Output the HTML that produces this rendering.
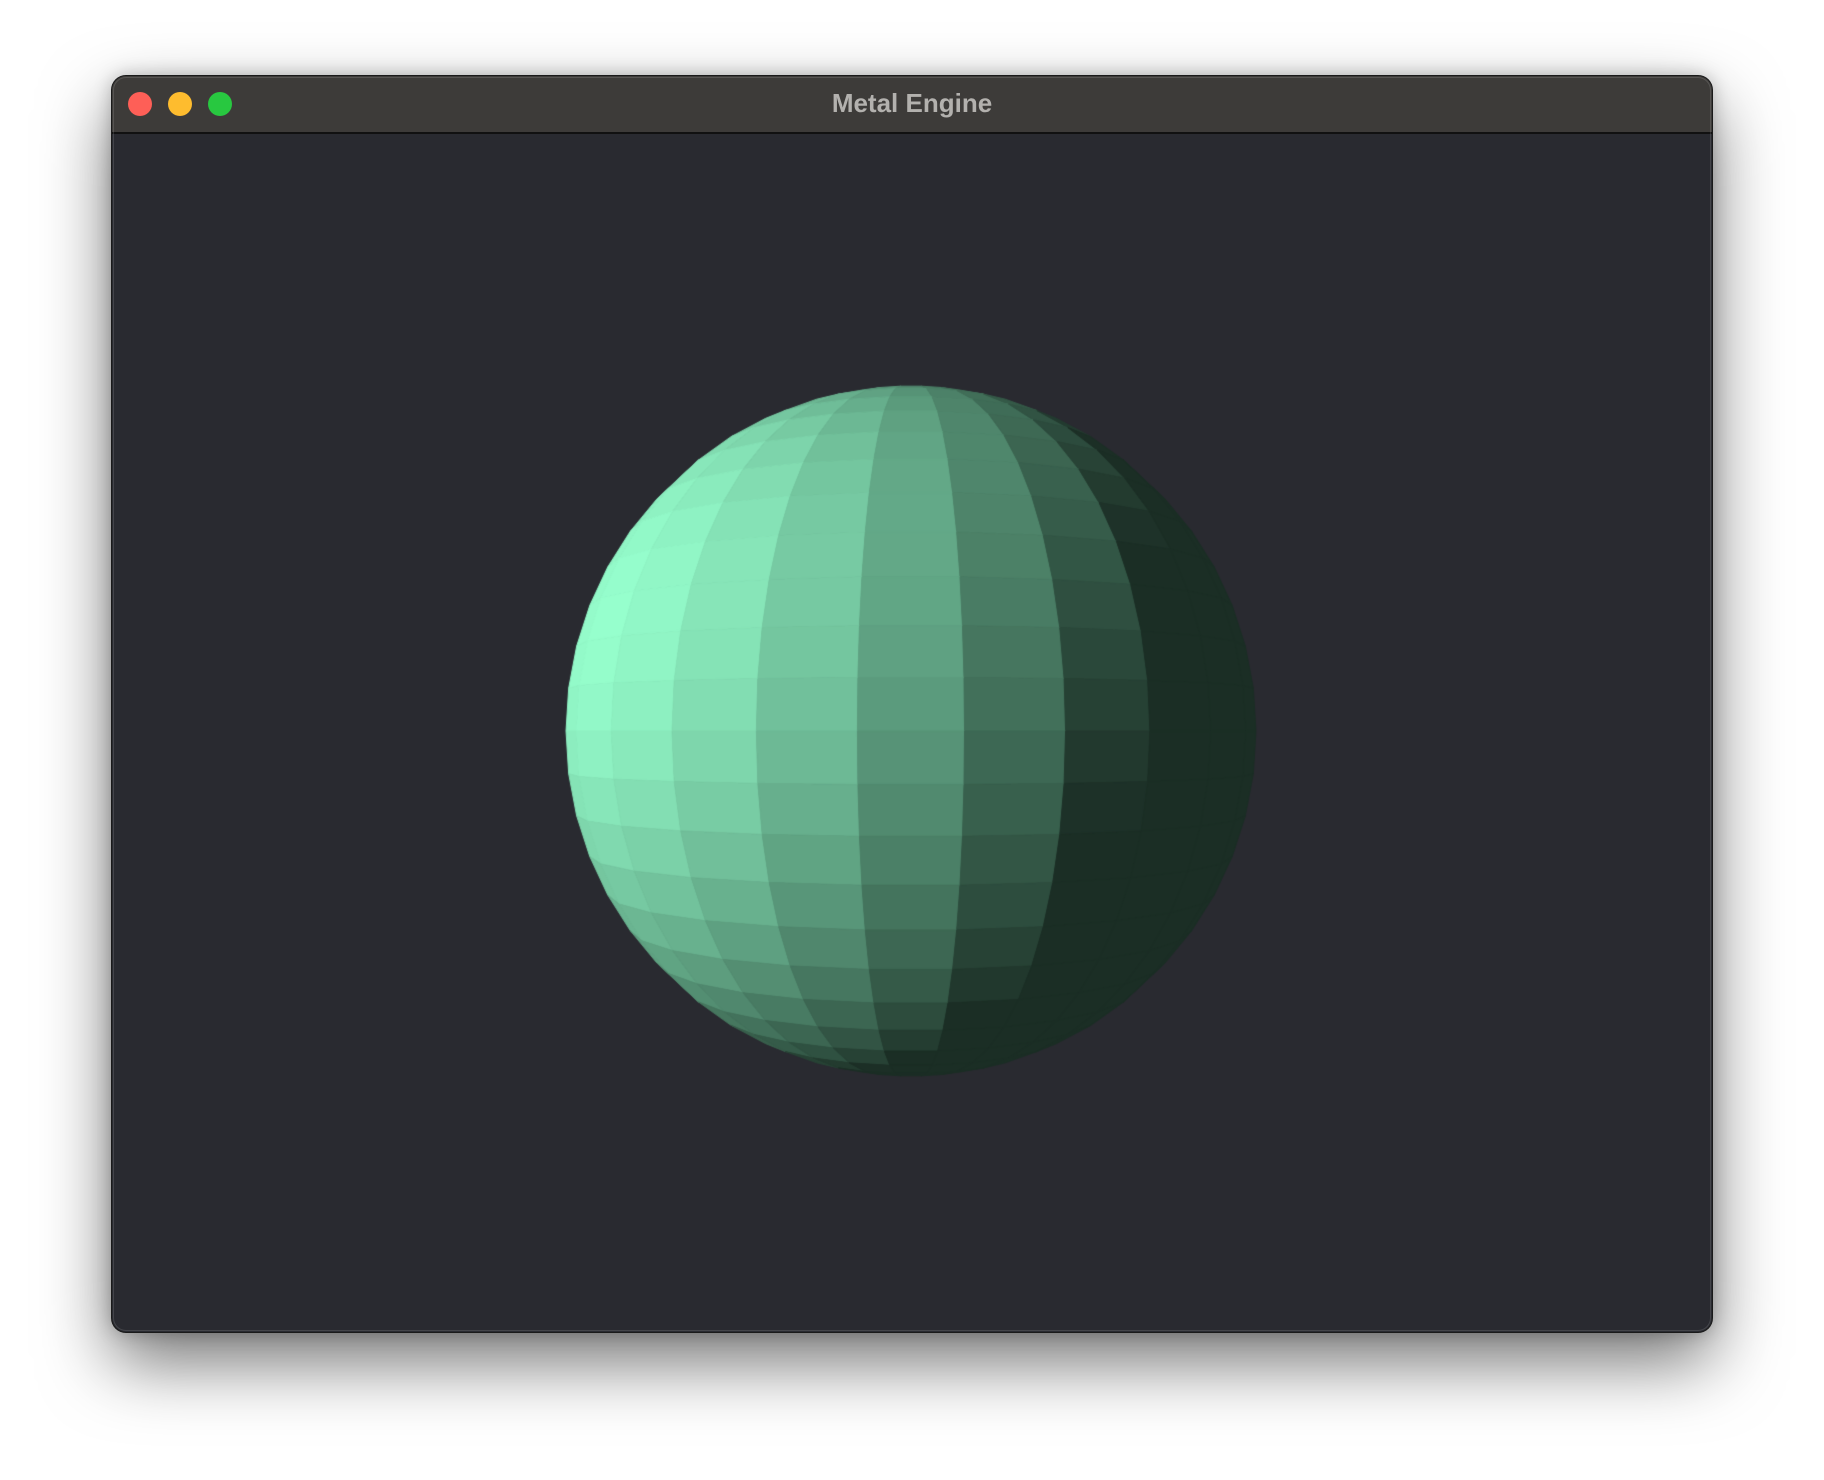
<!DOCTYPE html>
<html><head><meta charset="utf-8"><style>
html,body{margin:0;padding:0;width:1824px;height:1480px;background:#fff;overflow:hidden}
.win{position:absolute;left:112px;top:76px;width:1600px;height:1256px;border-radius:14px;background:#292a30;box-shadow:0 0 0 1px #1a1a1a,0 30px 70px rgba(0,0,0,0.55),0 0 18px rgba(0,0,0,0.25);overflow:hidden}
.win:after{content:"";position:absolute;inset:1px;border-radius:13px;box-shadow:inset 0 0 0 1px rgba(255,255,255,0.13);pointer-events:none}
.tb{position:absolute;left:0;top:0;width:100%;height:56px;background:#3d3b39;border-bottom:2px solid #111}
.t{position:absolute;left:0;right:0;top:12px;text-align:center;font:bold 26px "Liberation Sans",sans-serif;color:#b3b1ae}
.d{position:absolute;top:16px;width:24px;height:24px;border-radius:50%}
canvas{position:absolute;left:0;top:0}
</style></head><body>
<div class="win">
<div class="tb"><div class="d" style="left:16px;background:#fe5f57"></div><div class="d" style="left:56px;background:#febc2e"></div><div class="d" style="left:96px;background:#28c840"></div><div class="t">Metal Engine</div></div>
<canvas id="c" width="1600" height="1256"></canvas>
</div>
<script>
var c=document.getElementById('c'),g=c.getContext('2d');
var cx=911-112,cy=731-76,R=345,D=4,rs=1/Math.sqrt(D*D-1),S=R/rs;
var L=[-0.8,0.3,0.5],ln=Math.hypot(L[0],L[1],L[2]);L=L.map(function(v){return v/ln});
var NL=26,NM=26,off=Math.PI/NM;
function P(th,ph){var y=Math.cos(th),s=Math.sin(th);return [s*Math.sin(ph+off),y,s*Math.cos(ph+off)];}
function pr(p){var k=1/(D-p[2]);return [cx+p[0]*k*S,cy-p[1]*k*S];}
for(var i=0;i<NL;i++)for(var j=0;j<NM;j++){
var t0=Math.PI*i/NL,t1=Math.PI*(i+1)/NL,p0=2*Math.PI*j/NM-Math.PI,p1=2*Math.PI*(j+1)/NM-Math.PI;
var q=[P(t0,p0),P(t0,p1),P(t1,p1),P(t1,p0)];
var n=P((t0+t1)/2,(p0+p1)/2);
var v=[-n[0],-n[1],D-n[2]];if(n[0]*v[0]+n[1]*v[1]+n[2]*v[2]<=0)continue;
var dd=Math.max(0,n[0]*L[0]+n[1]*L[1]+n[2]*L[2]);
var I=0.18+0.82*dd;
var col='rgb('+Math.round(150*I)+','+Math.round(255*I)+','+Math.round(205*I)+')';
g.beginPath();q.forEach(function(p,k){var s=pr(p);k?g.lineTo(s[0],s[1]):g.moveTo(s[0],s[1]);});g.closePath();
g.fillStyle=col;g.strokeStyle=col;g.lineWidth=1;g.fill();g.stroke();}
</script>
</body></html>
